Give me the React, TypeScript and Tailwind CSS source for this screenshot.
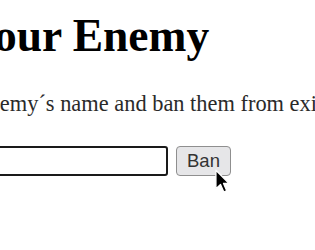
const Cursor = () => (
  <svg
    className="absolute left-[214px] top-[169px]"
    width="17"
    height="25"
    viewBox="0 0 12 19">
    <path
      d="M1 1 L1 15 L4.5 11.8 L7 17.5 L9.2 16.5 L6.8 11 L11 11 Z"
      fill="#000"
      stroke="#fff"
      strokeWidth="1"
      strokeLinejoin="round"
    />
  </svg>
);

export default function App() {
  return (
    <div className="relative h-[250px] w-[315px] overflow-hidden bg-white font-['Liberation_Serif',serif] text-black">
      <div className="ml-[-122px] w-[600px]">
        <h1 className="mt-[10px] text-[45.5px] leading-[52px] font-bold">Ban Your Enemy</h1>
        <p className="mt-[29px] text-[22.4px] leading-[26px] text-[#2a2a2a]">
          Enter your enemy´s name and ban them from existence.
        </p>
        <div className="mt-[29px] flex items-center gap-[8px]">
          <input
            type="text"
            className="h-[30px] w-[290px] rounded-[3px] border-2 border-[#1a1a1a] bg-white outline-none"
          />
          <button className="h-[30px] rounded-[4px] border border-[#8f8f8f] bg-[#e6e6e8] px-[10px] font-['Liberation_Sans',Arial,sans-serif] text-[18.5px] leading-none text-[#333]">
            Ban
          </button>
        </div>
      </div>
      <Cursor />
    </div>
  );
}
